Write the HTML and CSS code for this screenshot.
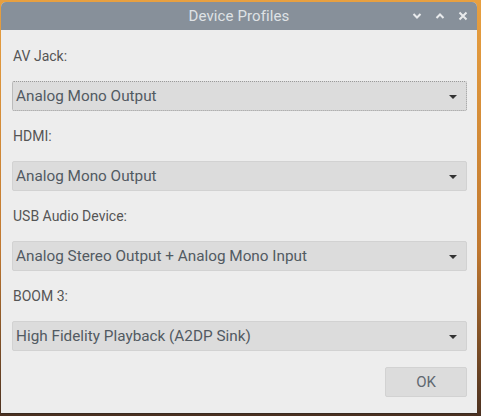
FILE: index.html
```html
<!DOCTYPE html>
<html>
<head>
<meta charset="utf-8">
<link rel="stylesheet" href="styles.css">
</head>
<body>
<div class="window">
  <div class="titlebar">
    <span class="title">Device Profiles</span>
    <div class="controls">
      <svg class="ctl" width="10" height="10" viewBox="0 0 10 10"><path d="M1.5 3 L5 6.5 L8.5 3" fill="none" stroke="#e8eaec" stroke-width="2"/></svg>
      <svg class="ctl" width="10" height="10" viewBox="0 0 10 10"><path d="M1.5 7 L5 3.5 L8.5 7" fill="none" stroke="#e8eaec" stroke-width="2"/></svg>
      <svg class="ctl" width="10" height="10" viewBox="0 0 10 10"><path d="M1.5 1.5 L8.5 8.5 M8.5 1.5 L1.5 8.5" fill="none" stroke="#e8eaec" stroke-width="2"/></svg>
    </div>
  </div>
  <div class="content">
    <div class="group">
      <div class="label">AV Jack:</div>
      <div class="combo focus"><span>Analog Mono Output</span><i class="arrow"></i></div>
    </div>
    <div class="group">
      <div class="label">HDMI:</div>
      <div class="combo"><span>Analog Mono Output</span><i class="arrow"></i></div>
    </div>
    <div class="group">
      <div class="label">USB Audio Device:</div>
      <div class="combo"><span>Analog Stereo Output + Analog Mono Input</span><i class="arrow"></i></div>
    </div>
    <div class="group">
      <div class="label">BOOM 3:</div>
      <div class="combo"><span>High Fidelity Playback (A2DP Sink)</span><i class="arrow"></i></div>
    </div>
    <div class="buttons">
      <div class="btn">OK</div>
    </div>
  </div>
</div>
</body>
</html>
```
FILE: styles.css
```css
html, body {
  margin: 0;
  padding: 0;
}
body {
  width: 481px;
  height: 416px;
  overflow: hidden;
  background: linear-gradient(180deg, #e8a040 0%, #c07830 60%, #4a3020 100%);
  font-family: Roboto, "Liberation Sans", sans-serif;
}
.window {
  margin: 2px 0 0 1px;
  width: 476px;
  height: 411px;
  background: #ededed;
  border-radius: 5px 5px 0 0;
  overflow: hidden;
  border-bottom: 1px solid #3a2a20;
  display: flex;
  flex-direction: column;
}
.titlebar {
  height: 28px;
  background: #87909a;
  display: flex;
  align-items: center;
  justify-content: center;
  position: relative;
  flex: none;
}
.title {
  color: #dfe2e5;
  font-size: 15px;
  letter-spacing: 0.1px;
}
.controls {
  position: absolute;
  right: 9px;
  top: 9px;
  display: flex;
  gap: 13px;
}
.ctl { display: block; }
.content {
  padding: 17px 10px 0 11px;
  display: flex;
  flex-direction: column;
}
.group {
  display: flex;
  flex-direction: column;
  margin-bottom: 16px;
}
.label {
  color: #555555;
  font-size: 14px;
  height: 18px;
  line-height: 18px;
  margin-bottom: 16px;
  padding-left: 1px;
}
.combo {
  height: 28px;
  background: #dcdcdc;
  border: 1px solid #d2d2d2;
  border-radius: 2px;
  display: flex;
  align-items: center;
  justify-content: space-between;
  padding: 0 9px 0 3px;
  color: #525a62;
  font-size: 15.3px;
}
.combo.focus {
  border: 1px dotted #9a9a9a;
}
.arrow {
  width: 0;
  height: 0;
  border-left: 4px solid transparent;
  border-right: 4px solid transparent;
  border-top: 4px solid #333;
  margin-top: 2px;
}
.buttons {
  display: flex;
  justify-content: flex-end;
}
.btn {
  width: 80px;
  height: 28px;
  background: #dcdcdc;
  border: 1px solid #d2d2d2;
  border-radius: 2px;
  display: flex;
  align-items: center;
  justify-content: center;
  color: #606870;
  font-size: 15px;
}
```
